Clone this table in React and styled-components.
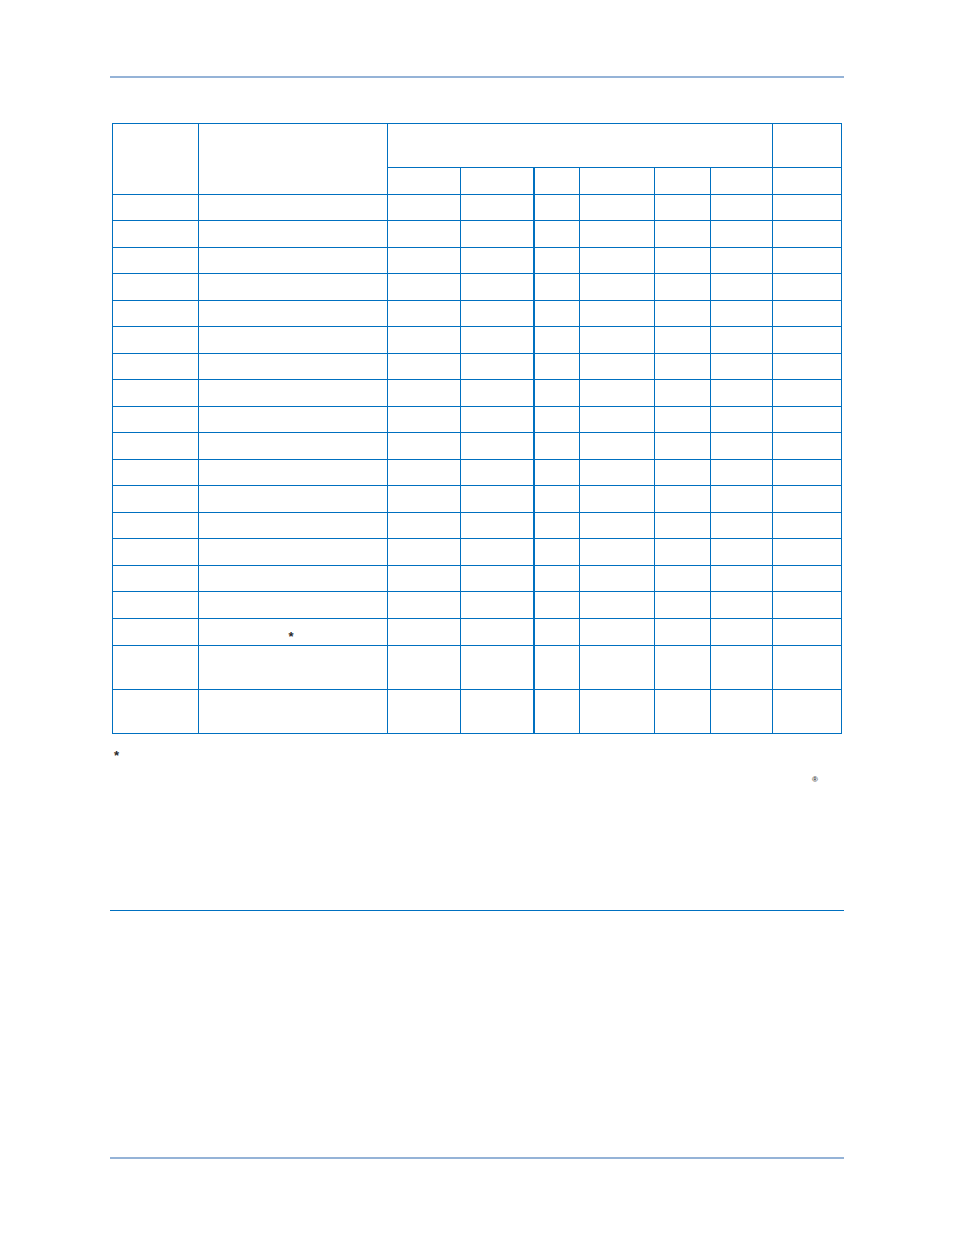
import React from "react";
import styled, { createGlobalStyle } from "styled-components";

const GlobalStyle = createGlobalStyle`
  html, body { margin: 0; padding: 0; background: #ffffff; }
  body { font-family: "Liberation Sans", Arial, sans-serif; color: #333333; }
`;

const BLUE = "#0070c0";
const LIGHT = "#95b3d7";

const Page = styled.div`
  width: 954px;
  min-height: 1235px;
  box-sizing: border-box;
  padding: 76px 110px 0 110px;
  display: flex;
  flex-direction: column;
`;

const Rule = styled.div`
  width: 734px;
  height: ${(p) => p.$thick}px;
  background: ${(p) => p.$color};
  margin-top: ${(p) => p.$top || 0}px;
  flex: none;
`;

const Grid = styled.div`
  margin: 45px 0 0 2px;
  width: max-content;
  display: grid;
  grid-template-columns: 86px 189px 73px 74px 45px 75px 56px 62px 69px;
  grid-template-rows: 44px 27px repeat(8, 26px 27px) 27px 44px 44px;
  border-top: 1px solid ${BLUE};
  border-left: 1px solid ${BLUE};
`;

const Cell = styled.div`
  box-sizing: border-box;
  border-right: ${(p) => (p.$thick ? 2 : 1)}px solid ${BLUE};
  border-bottom: 1px solid ${BLUE};
  grid-column: ${(p) => p.$col || "auto"};
  grid-row: ${(p) => p.$row || "auto"};
  display: flex;
  align-items: center;
  justify-content: center;
  font-size: 11px;
`;

const Star = styled.span`
  font-size: 13px;
  font-weight: bold;
  line-height: 1;
  color: #2a2a2a;
  transform: translate(${(p) => p.$dx || 0}px, ${(p) => p.$dy || 0}px);
`;

const NoteRow = styled.div`
  display: flex;
  justify-content: ${(p) => p.$align || "flex-start"};
  height: ${(p) => p.$h}px;
  margin-top: ${(p) => p.$top}px;
  padding: ${(p) => p.$pad || "0"};
  font-size: 12px;
  line-height: 1;
`;

const Reg = styled.span`
  font-size: 8px;
  font-weight: bold;
  line-height: 1;
  color: #444;
`;

const bodyRows = 19;

export default function App() {
  const rows = [];
  for (let r = 0; r < bodyRows; r++) {
    for (let c = 0; c < 9; c++) {
      rows.push(
        <Cell key={`${r}-${c}`} $thick={c === 3}>
          {r === 16 && c === 1 ? (
            <Star $dx={-2} $dy={4}>*</Star>
          ) : null}
        </Cell>
      );
    }
  }
  return (
    <>
      <GlobalStyle />
      <Page>
        <Rule $thick={2} $color={LIGHT} />
        <Grid>
          <Cell $col="1" $row="1 / span 2" />
          <Cell $col="2" $row="1 / span 2" />
          <Cell $col="3 / span 6" $row="1" />
          <Cell $col="9" $row="1" />
          <Cell $col="3" $row="2" />
          <Cell $col="4" $row="2" $thick />
          <Cell $col="5" $row="2" />
          <Cell $col="6" $row="2" />
          <Cell $col="7" $row="2" />
          <Cell $col="8" $row="2" />
          <Cell $col="9" $row="2" />
          {rows}
        </Grid>
        <NoteRow $h={12} $top={15} $pad="0 0 0 4px">
          <Star $dx={0} $dy={0}>*</Star>
        </NoteRow>
        <NoteRow $h={10} $top={15} $align="flex-end" $pad="0 26px 0 0">
          <Reg>®</Reg>
        </NoteRow>
        <Rule $thick={1} $color={BLUE} $top={124} />
        <Rule $thick={2} $color={LIGHT} $top={246} />
      </Page>
    </>
  );
}
